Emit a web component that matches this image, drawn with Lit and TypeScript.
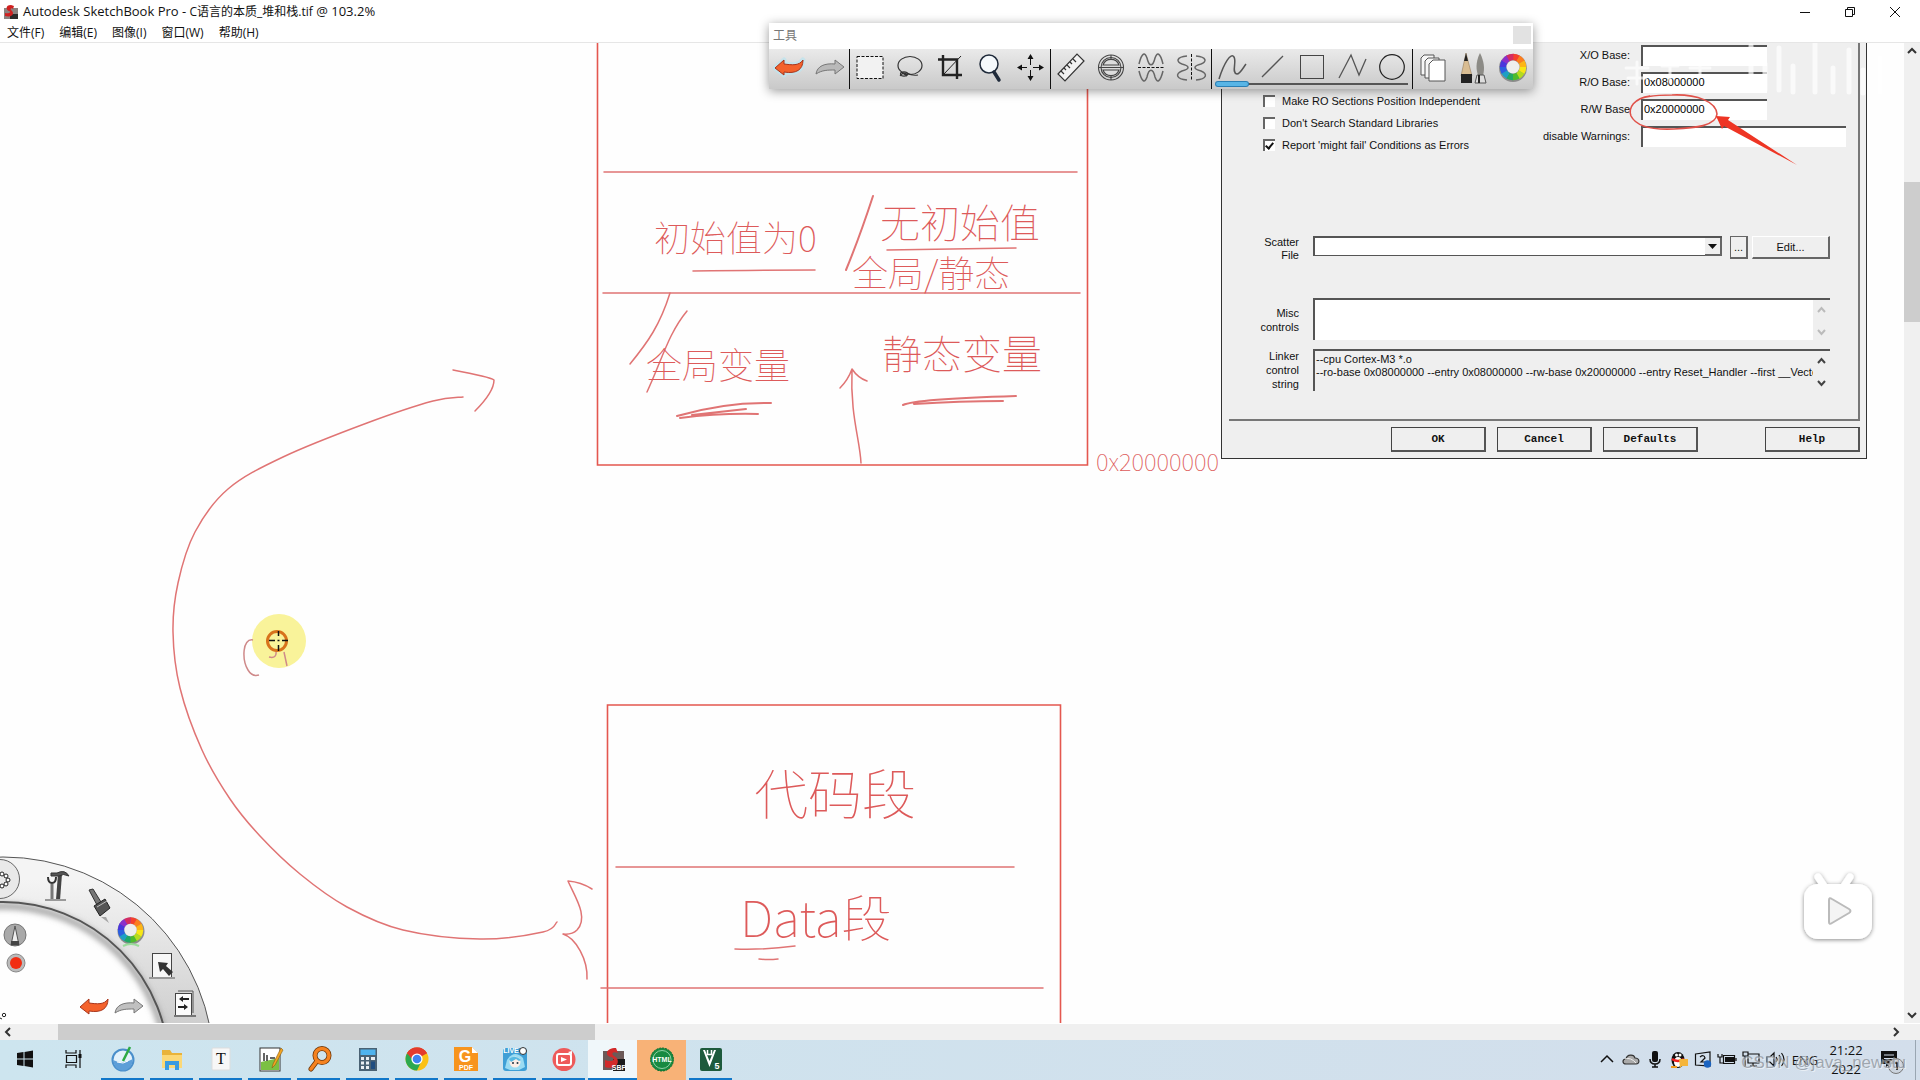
import { LitElement, html, svg, css, nothing } from "lit";
import { customElement, property } from "lit/decorators.js";

type Point = [number, number];

/** Joins points with a smooth line (Catmull-Rom turned into cubic segments). */
function smooth(points: Point[]): string {
  let d = `M${points[0][0]},${points[0][1]}`;
  for (let i = 0; i < points.length - 1; i++) {
    const a = points[Math.max(0, i - 1)];
    const b = points[i];
    const c = points[i + 1];
    const e = points[Math.min(points.length - 1, i + 2)];
    d += ` C${b[0] + (c[0] - a[0]) / 6},${b[1] + (c[1] - a[1]) / 6} ${c[0] - (e[0] - b[0]) / 6},${c[1] - (e[1] - b[1]) / 6} ${c[0]},${c[1]}`;
  }
  return d;
}

/** Hue ring made of short coloured arcs. */
function hueRing(cx: number, cy: number, r: number, w: number) {
  const hues = ["#f5402c", "#fb7d1e", "#fdb515", "#f7e615", "#b4dc1e", "#4dbb2c", "#21a866", "#1f9fc4", "#2c5fe0", "#4a36dc", "#8b2fc9", "#d52c62"];
  return hues.map((c, i) => {
    const a0 = ((i * 30 - 90) * Math.PI) / 180;
    const a1 = ((i * 30 - 58) * Math.PI) / 180;
    return svg`<path d="M${cx + r * Math.cos(a0)},${cy + r * Math.sin(a0)} A${r},${r} 0 0 1 ${cx + r * Math.cos(a1)},${cy + r * Math.sin(a1)}" fill="none" stroke=${c} stroke-width=${w}/>`;
  });
}

const undoShape = "M6 19 L15 11 L15 15 C23 16 30 17 34 11 C34 21 27 25 15 23 L15 26 Z";
const redoShape = "M35 18 L26 11 L26 15 C16 14 8 17 7 25 C13 21 19 21 26 21 L26 25 Z";

const toolIcons: Record<string, unknown> = {
  undo: svg`<path d=${undoShape} stroke="#bfe3ee" stroke-width="5" fill="none" stroke-linejoin="round" opacity=".8"/><path d=${undoShape} fill="#f4622c" stroke="#a8341a"/>`,
  redo: svg`<path d=${redoShape} fill="#b9b9b9" stroke="#777"/>`,
  select: svg`<rect x="7" y="7.500" width="26" height="22" fill="#f2f2f2" stroke="#111" stroke-width="1" stroke-dasharray="3 1.500"/>`,
  lasso: svg`<g fill="none" stroke="#333" stroke-width="1.200"><ellipse cx="20" cy="16.500" rx="12" ry="9"/><ellipse cx="14" cy="25" rx="3.500" ry="2.200"/><path d="M11 23 L17 27 M17 24 Q22 27 28 26 M10 27 Q14 22 17 26"/></g>`,
  crop: svg`<g fill="none" stroke="#222" stroke-width="2.400"><path d="M13 6 V26 H32"/><path d="M8 10.500 H27 V30"/><path d="M14 25 L31 7" stroke-width="1"/></g>`,
  zoom: svg`<circle cx="19" cy="15" r="9" fill="#f5f9fc" stroke="#1f2a3a" stroke-width="1.500"/><path d="M24 23 L29 31" stroke="#1f2a3a" stroke-width="3.500" stroke-linecap="round"/>`,
  move: svg`<g stroke="#111" fill="#111"><path d="M20.500 9 V16 M20.500 21 V28 M10 18.500 H17 M23 18.500 H30" stroke-width="1"/><path d="M20.500 5 L23.500 10 H17.500 Z M20.500 32 L23.500 27 H17.500 Z M7 18.500 L12 15.500 V21.500 Z M34 18.500 L29 15.500 V21.500 Z" stroke="none"/></g>`,
  ruler: svg`<g fill="#f2f2f2" stroke="#333" stroke-width="1.200"><path d="M7 25 L26 5 L33 12 L14 32 Z"/><path d="M10 22 l3 3 M13 19 l2 2 M16 16 l3 3 M19 13 l2 2 M22 10 l3 3" fill="none"/></g>`,
  ellipse: svg`<g fill="none" stroke="#444" stroke-width="1.100"><circle cx="20" cy="18.500" r="12.500"/><circle cx="20" cy="18.500" r="10"/><path d="M12 16 A8.500 8.500 0 0 1 28 16 Z M12 21 A8.500 8.500 0 0 0 28 21 Z" fill="#ddd"/><path d="M7 18.500 H33 M20 6 v4 M20 27 v4"/></g>`,
  symx: svg`<g fill="none" stroke="#666" stroke-width="1.500"><path d="M8 15 C11 3 14 3 16 9 C18 18 22 18 24 9 C26 3 29 3 32 15"/><path d="M8 22 C11 34 14 34 16 28 C18 19 22 19 24 28 C26 34 29 34 32 22"/><path d="M7 18.500 H34" stroke="#111" stroke-width="1" stroke-dasharray="3 1.500"/></g>`,
  symy: svg`<g fill="none" stroke="#666" stroke-width="1.500"><path d="M16 7 C5 8 5 13 11 15 C19 17 19 20 11 22 C4 25 5 30 16 31"/><path d="M25 7 C36 8 36 13 30 15 C22 17 22 20 30 22 C37 25 36 30 25 31"/><path d="M20.500 5 V32" stroke="#111" stroke-width="1" stroke-dasharray="3 1.500"/></g>`,
  curve: svg`<path d="M7 30 C12 14 19 3 22 8 C25 13 19 24 25 25 C28 25 31 19 34 15" fill="none" stroke="#555" stroke-width="1.500"/>`,
  line: svg`<path d="M10 28 L31 7" stroke="#555" stroke-width="1.300"/>`,
  square: svg`<rect x="8.500" y="6.500" width="23" height="23" fill="none" stroke="#444"/>`,
  poly: svg`<path d="M7 29 L19 6 L27 26 L34 10" fill="none" stroke="#555" stroke-width="1.300"/>`,
  circle: svg`<circle cx="20" cy="18" r="12.300" fill="none" stroke="#222" stroke-width="1.200"/>`,
  layers: svg`<g fill="#f6f6f6" stroke="#555"><path d="M8 9 l3 -3 h10 v20 h-13 Z"/><path d="M12 12 l3 -3 h11 v20 h-14 Z"/><path d="M16 15 l4 -4 h12 v21 h-16 Z" fill="#fff"/></g>`,
  pencils: svg`<path d="M8 27 L13 4 L19 27 Z" fill="#d9bd93" stroke="#8a6f4a" stroke-width=".500"/><path d="M11 12 L13 4 L15 12 Z" fill="#222"/><path d="M8 25 h11 v9 h-11 Z" fill="#222"/><path d="M27 4 C31 12 32 20 30 26 H25 C22 18 24 10 27 4 Z" fill="#8c8b86"/><path d="M24 26 h7 l2 8 h-11 Z" fill="#ddd" stroke="#555"/><path d="M26 26 v8" stroke="#222" stroke-width="2"/>`,
  wheel: svg`<circle cx="20" cy="19" r="14" fill="#222" opacity=".4"/>${hueRing(20, 18, 10, 6.5)}<circle cx="20" cy="18" r="6.500" fill="#eee"/>`,
};

const toolGroups = [
  [["undo", "撤消"], ["redo", "重做"]],
  [["select", "选择"], ["lasso", "套索"], ["crop", "裁剪"], ["zoom", "缩放"], ["move", "移动"]],
  [["ruler", "直尺"], ["ellipse", "椭圆"], ["symx", "水平对称"], ["symy", "垂直对称"]],
  [["curve", "曲线"], ["line", "直线"], ["square", "矩形"], ["poly", "折线"], ["circle", "圆"]],
  [["layers", "图层"], ["pencils", "画笔"], ["wheel", "颜色"]],
];

@customElement("tool-palette")
class ToolPalette extends LitElement {
  static styles = css`
    :host { display: block; background: #fff; box-shadow: 0 2px 10px rgba(0, 0, 0, .4); font: 12px/14px "Liberation Sans", "Noto Sans CJK SC", sans-serif; }
    .head { display: flex; justify-content: space-between; padding: 3px 2px 5px 4px; color: #777; }
    .name { padding-top: 3px; }
    .close { width: 18px; height: 18px; border: 0; padding: 0; background: #e2e2e2; }
    .tools { display: flex; background: linear-gradient(#eaeaea, #c9c9c9); height: 40px; }
    .group { display: flex; position: relative; }
    .group + .group { border-left: 1px solid #111; }
    .tool { width: 40px; height: 40px; border: 0; padding: 0; background: none; }
    .tool svg { display: block; }
    .track { position: absolute; left: 4px; right: 4px; bottom: 4px; height: 2px; background: #555; }
    .mark { position: absolute; left: 0; top: -1px; width: 32px; height: 4px; border-radius: 2px; background: #58b5e6; box-shadow: 0 0 0 1px #2a7fb4; }
  `;
  render() {
    return html`
      <div class="head"><span class="name">工具</span><button class="close" aria-label="关闭"></button></div>
      <div class="tools">
        ${toolGroups.map((g, i) => html`<div class="group">
          ${g.map(([id, name]) => html`<button class="tool" aria-label=${name}><svg width="40" height="40" viewBox="0 0 40 40">${toolIcons[id]}</svg></button>`)}
          ${i === 3 ? html`<div class="track"><div class="mark"></div></div>` : nothing}
        </div>`)}
      </div>`;
  }
}

@customElement("linker-dialog")
class LinkerDialog extends LitElement {
  static styles = css`
    :host { display: block; box-sizing: border-box; background: #efefef; border: solid #333; border-width: 0 1px 1px; padding: 0 6px 6px 7px; font: 11px/14px "Liberation Sans", sans-serif; color: #111; }
    .panel { border: solid #777; border-width: 0 2px 2px 0; padding: 2px 28px 28px 20px; }
    .top { display: flex; align-items: flex-start; }
    .checks { display: flex; flex-direction: column; gap: 8px; padding: 49px 0 0 14px; flex: 1; }
    .check { display: flex; align-items: center; gap: 7px; white-space: nowrap; }
    .check input { appearance: none; margin: 0; width: 12px; height: 12px; background: #fff; border: solid #666; border-width: 2px 0 0 2px; }
    .check input:checked { position: relative; }
    .check input:checked::after { content: ""; position: absolute; left: 2px; top: 0; width: 3px; height: 6px; border: solid #111; border-width: 0 2px 2px 0; transform: rotate(40deg); }
    .fields { display: grid; grid-template-columns: auto 205px; column-gap: 11px; row-gap: 6px; margin-right: -16px; }
    .fields label { text-align: right; line-height: 21px; }
    input.text { box-sizing: border-box; width: 126px; height: 21px; border: solid #555; border-width: 2px 0 0 2px; background: #fff; font: inherit; padding: 0 0 3px 1px; }
    input.wide { width: 100%; }
    .rows { display: grid; grid-template-columns: 50px 1fr; column-gap: 14px; padding-top: 84px; }
    .rows label { text-align: right; }
    .lab1 { line-height: 13px; }
    .combo { display: flex; gap: 4px; margin-bottom: 39px; align-items: flex-start; }
    .selectbox { flex: 1; position: relative; margin-right: 4px; }
    select { appearance: none; display: block; width: 100%; height: 20px; background: #fff; border: solid #555; border-width: 2px 1px 1px 2px; border-radius: 0; }
    .drop { position: absolute; right: 0; top: 2px; width: 17px; height: 18px; background: #efefef; border: solid #666; border-width: 0 2px 2px 0; box-sizing: border-box; pointer-events: none; }
    .drop svg { display: block; }
    button { font: inherit; color: inherit; box-sizing: border-box; background: #efefef; border: solid #666; border-width: 1px 2px 2px 1px; padding: 0; border-radius: 0; }
    .dots { width: 18px; height: 23px; }
    .edit { width: 78px; height: 23px; border-color: #fff #666 #666 #fff; }
    .area { display: flex; height: 42px; border: solid #555; border-width: 2px 0 0 2px; background: #fff; box-sizing: border-box; }
    .misc { margin-bottom: 9px; }
    .misc-label { padding-top: 8px; }
    .string { background: #efefef; }
    textarea { flex: 1; min-width: 0; border: 0; padding: 2px 0 0 1px; background: none; resize: none; overflow: hidden; white-space: pre; font: 11px/13px "Liberation Sans", sans-serif; color: #111; outline: 0; }
    .bar { width: 17px; background: #efefef; }
    .bar svg { display: block; }
    .actions { display: flex; gap: 11px; padding: 6px 0 0 162px; }
    .actions button { width: 95px; height: 25px; font: bold 11px/14px "Liberation Mono", monospace; border-color: #444 #555 #555 #444; }
    .actions .help { margin-left: auto; }
  `;
  private bar(color: string) {
    return html`<div class="bar"><svg width="17" height="40" viewBox="0 0 17 40" fill="none" stroke=${color} stroke-width="2"><path d="M5 12 L8.500 8 L12 12 M5 30 L8.500 34 L12 30"/></svg></div>`;
  }
  render() {
    return html`
      <div class="panel">
        <div class="top">
          <div class="checks">
            <label class="check"><input type="checkbox" />Make RO Sections Position Independent</label>
            <label class="check"><input type="checkbox" />Don't Search Standard Libraries</label>
            <label class="check"><input type="checkbox" checked />Report 'might fail' Conditions as Errors</label>
          </div>
          <div class="fields">
            <label for="xo">X/O Base:</label><input class="text" id="xo" />
            <label for="ro">R/O Base:</label><input class="text" id="ro" value="0x08000000" />
            <label for="rw">R/W Base</label><input class="text" id="rw" value="0x20000000" />
            <label for="dw">disable Warnings:</label><input class="text wide" id="dw" />
          </div>
        </div>
        <div class="rows">
          <label class="lab1" for="scatter">Scatter<br />File</label>
          <div class="combo">
            <div class="selectbox">
              <select id="scatter"><option></option></select>
              <span class="drop"><svg width="15" height="16" viewBox="0 0 15 16"><path d="M3 6 H12 L7.500 11 Z" fill="#111"/></svg></span>
            </div>
            <button class="dots">...</button>
            <button class="edit">Edit...</button>
          </div>
          <label class="misc-label" for="misc">Misc<br />controls</label>
          <div class="area misc"><textarea id="misc"></textarea>${this.bar("#bbb")}</div>
          <label for="string">Linker<br />control<br />string</label>
          <div class="area string"><textarea id="string" readonly wrap="off" .value=${"--cpu Cortex-M3 *.o\n--ro-base 0x08000000 --entry 0x08000000 --rw-base 0x20000000 --entry Reset_Handler --first __Vectors"}></textarea>${this.bar("#444")}</div>
        </div>
      </div>
      <div class="actions"><button>OK</button><button>Cancel</button><button>Defaults</button><button class="help">Help</button></div>`;
  }
}

/** Corner puck with quick tools, drawn in canvas coordinates shifted by its own origin. */
@customElement("corner-puck")
class CornerPuck extends LitElement {
  static styles = css`
    :host { display: block; }
    svg { display: block; }
  `;
  render() {
    return html`<svg width="222" height="172" viewBox="0 851 222 172" role="img" aria-label="工具盘">
      <defs>
        <linearGradient id="ring" x1="0" y1="0" x2="0" y2="1"><stop offset="0" stop-color="#f4f4f4"/><stop offset=".4" stop-color="#cdcdcd"/></linearGradient>
        <filter id="soft"><feGaussianBlur stdDeviation="3"/></filter>
      </defs>
      <circle cx="3" cy="1068" r="188.500" fill="none" stroke="url(#ring)" stroke-width="45"/>
      <circle cx="3" cy="1068" r="211" fill="none" stroke="#555"/>
      <circle cx="3" cy="1070" r="164" fill="none" stroke="#888" stroke-width="5" filter="url(#soft)"/>
      <circle cx="3" cy="1068" r="166" fill="none" stroke="#555" stroke-width="2"/>
      <circle cx="0" cy="879" r="19.500" fill="#e9e9e9" stroke="#666"/>
      <g fill="#fff" stroke="#222"><circle cx="2" cy="874" r="2"/><circle cx="6" cy="876" r="2"/><circle cx="8" cy="880" r="2"/><circle cx="6" cy="884" r="2"/><circle cx="2" cy="886" r="2"/></g>
      <g stroke="#333" fill="none">
        <path d="M60 874 L58 900" stroke-width="4" stroke="#444"/>
        <path d="M51 873 h6 q8 -4 12 3 q-6 -3 -10 0 h-8 Z" fill="#555"/>
        <path d="M52 884 V900" stroke-width="3" stroke="#777"/>
        <path d="M48 877 q0 6 4 6 q4 0 4 -6" stroke-width="2"/>
        <path d="M45 900 H66" stroke="#999" stroke-width="2"/>
      </g>
      <g><path d="M89 890 L93 889 L101 902 L97 905 Z" fill="#777" stroke="#333"/><path d="M94 906 L105 899 L110 908 L100 916 Z" fill="#555" stroke="#222"/><path d="M97 907 L107 901" stroke="#bbb"/><path d="M87 917 h14 l8 6 l-3 -6" fill="#888" opacity=".7"/></g>
      <circle cx="131" cy="931" r="13.500" fill="#222" opacity=".45"/>${hueRing(130.5, 930, 9.5, 6.5)}<circle cx="130.500" cy="930" r="6.200" fill="#eee"/>
      <path d="M123 946 q8 -4 16 0" fill="none" stroke="#9bdc9b" stroke-width="2"/>
      <rect x="152.500" y="953.500" width="19" height="24" fill="#f7f7f7" stroke="#444"/><path d="M158 962 L168 963 L166 966 L173 972 L169 976 L163 969 L160 972 Z" fill="#333"/><path d="M149 978 H175" stroke="#999" stroke-width="2"/>
      <path d="M178 991 h15 v22" fill="none" stroke="#555"/><rect x="175.500" y="993.500" width="16" height="22" fill="#fbfbfb" stroke="#444"/>
      <path d="M179 999 l4 -3 v2 h6 v2 h-6 v2 Z M188 1007 l-4 -3 v2 h-6 v2 h6 v2 Z" fill="#222"/><path d="M174 1016 H196" stroke="#777" stroke-width="2"/>
      <circle cx="15" cy="935" r="11" fill="#a9a9a9" stroke="#777"/><path d="M11 945 L15 926 L19 945 Z" fill="#eee" stroke="#555"/><path d="M11 941 h8 v4 h-8 Z" fill="#444"/>
      <circle cx="16" cy="963" r="9" fill="#bbb" stroke="#888"/><circle cx="16" cy="963" r="6" fill="#f12d12"/>
      <g transform="translate(74 988)"><path d=${undoShape} fill="#f4622c" stroke="#a8341a"/></g>
      <g transform="translate(108 988)"><path d=${redoShape} fill="#c0c0c0" stroke="#777"/></g>
      <circle cx="4" cy="1015" r="1.700" fill="#fff" stroke="#222"/><path d="M0 1018 l2 1" stroke="#222"/>
    </svg>`;
  }
}

const loop: Point[] = [[463, 397], [433, 401], [367, 423], [283, 457], [228, 489], [195, 532], [178, 583], [173, 632], [180, 688], [202, 750], [230, 799], [260, 836], [300, 874], [347, 907], [403, 930], [480, 939], [543, 932], [557, 922]];

/** Handwritten notes: [x, baseline, size class, text]. */
const notes: [number, number, string, string][] = [
  [654, 252, "m", "初始值为0"],
  [880, 238, "l", "无初始值"],
  [852, 287, "m", "全局/静态"],
  [646, 379, "m", "全局变量"],
  [882, 369, "l", "静态变量"],
  [754, 815, "xl", "代码段"],
  [740, 937, "l2", "Data段"],
  [1096, 471, "s", "0x20000000"],
];

@customElement("ink-layer")
class InkLayer extends LitElement {
  static styles = css`
    :host { display: block; pointer-events: none; }
    svg { display: block; }
    text { font-family: "Noto Sans CJK SC", sans-serif; font-weight: 100; fill: #dd5a5a; }
    .s { font-size: 24px; }
    .m { font-size: 36px; }
    .l { font-size: 40px; }
    .l2 { font-size: 50px; }
    .xl { font-size: 54px; }
  `;
  render() {
    return html`<svg width="1904" height="980" viewBox="0 43 1904 980">
      <g fill="none" stroke="#e4574f" stroke-width="1.600">
        <path d="M597.500 43 V465 H1087.500 V43"/>
        <path d="M607.500 1023 V705 H1060.500 V1023"/>
      </g>
      <g fill="none" stroke="#e07474" stroke-width="1.500" stroke-linecap="round" stroke-linejoin="round">
        <path d="M604 172 H1077 M603 293 H1080 M616 867 H1014 M601 988 H1043"/>
        <path d="M873 196 Q860 236 846 270" stroke-width="2"/>
        <path d="M693 271 Q760 270 815 270 M887 250 Q950 249 1016 248"/>
        <path d="M670 293 C660 325 648 342 630 364 M687 311 C668 334 662 360 647 392"/>
        <path d="M677 416 Q725 402 771 403 M680 418 Q720 413 758 414 M692 415 L746 409" stroke-width="2"/>
        <path d="M903 405 Q915 399 1016 396 M914 404 Q960 401 1003 401" stroke-width="2"/>
        <path d="M861 463 C860 440 850 415 852 369 M840 388 Q848 380 852 369 Q858 378 867 381"/>
        <path d="M735 949 Q765 950 795 946 M759 959 Q768 960 778 959"/>
        <path d=${smooth(loop)}/>
        <path d="M453 370 Q490 377 494 380 Q494 392 475 411"/>
        <path d="M592 889 Q581 882 568 881 C575 897 589 917 577 930 Q572 935 563 934 C576 938 588 960 587 979"/>
      </g>
      ${notes.map(([x, y, c, t]) => svg`<text x=${x} y=${y} class=${c}>${t}</text>`)}
      <circle cx="279" cy="641" r="27" fill="#f9f39a"/>
      <path d="M253 640 C242 638 242 660 248 670 Q252 677 259 675 M269 657 Q277 659 276 651 M284 652 L287 666" fill="none" stroke="#cf8a8a" stroke-width="1.500"/>
      <circle cx="277" cy="641" r="9.500" fill="none" stroke="#d8731c" stroke-width="3"/>
      <path d="M269 640.500 H275 M282 640.500 H288 M278.500 631 V636 M278.500 645 V651 M277.500 640.500 h2" stroke="#111" stroke-width="1.500"/>
      <g fill="none" stroke="#fff" stroke-width="5" stroke-linecap="round" opacity=".7">
        <path d="M1751 46 V90 M1765 64 V90 M1779 48 V90 M1793 66 V92 M1815 44 V92 M1833 68 V92 M1849 50 V92 M1863 70 V93 M1880 58 V92"/>
        <path d="M1626 68 h22 M1637 62 v22 M1628 78 h18 M1662 66 h16 M1670 66 v16 M1690 68 h20 M1700 64 v12" stroke-width="3"/>
      </g>
      <path d="M1650 96 C1634 98 1628 108 1631 116 C1636 126 1652 130 1674 129 C1695 128 1716 126 1717 114 C1716 102 1698 94 1672 95 C1655 95 1642 96 1637 101" fill="none" stroke="#e0524a" stroke-width="1.600"/>
      <path d="M1716 116 L1730 117 L1728 120 L1797 165 L1724 126 L1722 129 Z" fill="#ee3524"/>
    </svg>`;
  }
}

const play = svg`<g fill="#fff" filter="url(#glow)"><path d="M19 13 L25 22 M51 13 L45 22" stroke="#fff" stroke-width="7" stroke-linecap="round"/><rect x="5" y="20" width="68" height="55" rx="14"/></g><path d="M30 36 Q30 33 33 35 L50 45 Q53 47 50 49 L33 59 Q30 61 30 58 Z" fill="#f4f4f4" stroke="#bbb" stroke-width="2"/>`;

const taskIcons: [string, string, unknown][] = [
  ["开始", "", svg`<path d="M6 8 L12.500 7 V13.500 H6 Z M13.500 7 L22 5.500 V13.500 H13.500 Z M6 14.500 H12.500 V21 L6 20 Z M13.500 14.500 H22 V22.500 L13.500 21 Z" fill="#111"/>`],
  ["任务视图", "", svg`<path d="M6 5 v3 h10 v-3 M6 23 v-3 h10 v3 M6.500 10.500 h10 v7 h-10 Z M20 5 v18" fill="none" stroke="#111" stroke-width="1.200"/><path d="M18.500 9 h3 v4 h-3 Z" fill="#111"/>`],
  ["浏览器", "on", svg`<circle cx="14" cy="15" r="10.500" fill="#e3f2fb" stroke="#4a8fcb" stroke-width="2"/><path d="M4 15 Q14 20 24 14 Q23 25 14 25.500 Q5 25 4 15 Z" fill="#5d9ed8"/><path d="M14 16 L21 2" stroke="#2eab45" stroke-width="2.500"/><path d="M8 17 l6 1 l5 -2" stroke="#fff" fill="none"/>`],
  ["文件资源管理器", "on", svg`<path d="M4 5 h8 l2 3 h10 v14 h-20 Z" fill="#e9b33a"/><path d="M4 10 h20 v13 h-20 Z" fill="#fcd876"/><path d="M7 25 v-9 h14 v9 h-4 v-5 h-6 v5 Z" fill="#3a9be0"/>`],
  ["Typora", "on", svg`<rect x="5" y="3" width="18" height="22" rx="1" fill="#f7f7f7" stroke="#ddd"/><text x="14" y="19" text-anchor="middle" class="serif">T</text>`],
  ["记事本", "on", svg`<rect x="4" y="3" width="20" height="23" fill="#fff" stroke="#333"/><path d="M5 17 L23 13 V25 H5 Z" fill="#7bc043"/><path d="M8 8 v8 M11 10 v6 M14 13 h5" stroke="#333" stroke-width="1.500"/><path d="M25 3 L17 19 l-1 4 l3 -3 L27 5 Z" fill="#f5a623" stroke="#8a5a10" stroke-width=".600"/>`],
  ["搜索", "on", svg`<circle cx="17" cy="10.500" r="7" fill="none" stroke="#6b3508" stroke-width="5"/><path d="M12 16 L6 24" stroke="#6b3508" stroke-width="5" stroke-linecap="round"/><circle cx="17" cy="10.500" r="7" fill="none" stroke="#f58220" stroke-width="3.500"/><path d="M12 16 L6 24" stroke="#f58220" stroke-width="3.500" stroke-linecap="round"/>`],
  ["计算器", "on", svg`<rect x="5" y="3" width="18" height="23" fill="#4a6274"/><rect x="6.500" y="4.500" width="15" height="5.500" fill="#4fb3ee"/><g fill="#e9eef2"><path d="M7 12h3v3h-3zM12 12h3v3h-3zM7 16.500h3v3h-3zM12 16.500h3v3h-3zM7 21h3v3h-3zM12 21h3v3h-3zM17 12h4v3h-4z"/></g><rect x="17" y="16.500" width="4" height="7.500" fill="#1f4d80"/>`],
  ["Chrome", "on", svg`<circle cx="14" cy="14" r="11.500" fill="#fbc116"/><path d="M14 14 L4 8.300 A11.500 11.500 0 0 1 24 8.300 Z" fill="#e33b2e"/><path d="M4 8.300 A11.500 11.500 0 0 0 14 25.500 L18.500 16 Z" fill="#2da94f"/><path d="M4 8.300 A11.500 11.500 0 0 1 24 8.300 L14 9 L9 14 Z" fill="#e33b2e"/><circle cx="14" cy="14" r="5.600" fill="#fff"/><circle cx="14" cy="14" r="4.300" fill="#3f82f1"/>`],
  ["PDF", "on", svg`<path d="M2 2 H20 L26 8 V26 H2 Z" fill="#f7941d"/><path d="M20 2 V8 H26 Z" fill="#fff"/><text x="13" y="17" text-anchor="middle" class="big">G</text><text x="14" y="25" text-anchor="middle" class="tiny">PDF</text>`],
  ["LIVE", "on", svg`<rect x="2" y="3" width="24" height="23" rx="3" fill="#3f9fd6"/><path d="M6 15 Q13 4 22 13 L24 22 L18 25 H9 L4 23 Z" fill="#9bdcf3"/><circle cx="14" cy="17" r="5.500" fill="#fdeee6"/><path d="M8 14 Q14 9 20 15 L18 16 L15 14 L10 17 Z" fill="#57b9e2"/><circle cx="12" cy="18" r="1" fill="#234"/><circle cx="16.500" cy="18" r="1" fill="#234"/><circle cx="22" cy="6" r="3.500" fill="#fff" stroke="#333"/><text x="10" y="8" text-anchor="middle" class="tiny">LIVE</text>`],
  ["录屏", "on", svg`<circle cx="14" cy="14.500" r="11.500" fill="#ee5a5a"/><rect x="7" y="9" width="14" height="11" rx="2" fill="none" stroke="#fff" stroke-width="2"/><path d="M11 12 l6 2.500 l-6 2.500 Z M18 7 l4 -1 v4 Z" fill="#fff"/>`],
  ["SketchBook", "on active", svg`<rect x="4" y="6" width="21" height="19" fill="#6c5a58"/><path d="M14 14 H26 V26 H14 Z" fill="#1b1b1b"/><path d="M17 3 C6 3 6 11 12 12 C18 14 13 18 6 15 V22 C18 26 23 15 15 11 C11 8 15 6 19 8 Z" fill="#d22a2a"/><text x="20" y="25" text-anchor="middle" class="tiny">SBP</text>`],
  ["编辑器", "alert", svg`<circle cx="14" cy="14.500" r="11.500" fill="#178a41" stroke="#0c6b2f" stroke-width="1" stroke-dasharray="2 1"/><circle cx="14" cy="14.500" r="9" fill="none" stroke="#8fd0a5"/><text x="14" y="17" text-anchor="middle" class="tiny">HTML</text>`],
  ["uVision5", "on", svg`<rect x="3" y="3" width="22" height="23" rx="2" fill="#1d5a3c"/><path d="M6 5 L12.500 22 L19 5 H17 L12.500 16 L8 5 Z" fill="#fff"/><path d="M10.500 5 V9.500 H14.500 V5" fill="none" stroke="#fff" stroke-width="1.500"/><text x="20" y="24" text-anchor="middle" class="mid">5</text>`],
];

const trayIcons: [string, unknown][] = [
  ["显示隐藏的图标", svg`<path d="M6 14 L12 8 L18 14" fill="none" stroke="#111" stroke-width="1.500"/>`],
  ["云", svg`<path d="M7 16 C3 16 3 11 7 11 C8 6 15 6 16 10 C21 10 21 16 17 16 Z" fill="#aaa" stroke="#333" stroke-width="1.200"/><path d="M6 11 Q12 9 17 15" stroke="#eee" fill="none"/>`],
  ["麦克风", svg`<rect x="9" y="3" width="6" height="11" rx="2" fill="#111"/><path d="M7 11 Q7 16 12 16 Q17 16 17 11 M12 16 V19 M9 19 h6" fill="none" stroke="#111" stroke-width="1.500"/>`],
  ["QQ", svg`<ellipse cx="11" cy="12" rx="6.500" ry="8" fill="#111"/><ellipse cx="11" cy="14" rx="4" ry="5" fill="#fff"/><path d="M5 11 Q11 15 17 11" stroke="#e22" stroke-width="2.500" fill="none"/><circle cx="9.500" cy="7" r="1.500" fill="#fff"/><circle cx="13" cy="7" r="1.500" fill="#fff"/><path d="M12 11 h9 v7 h-6 l-2 2 Z" fill="#f5b53a"/><path d="M4 19 h6" stroke="#f29b1d" stroke-width="2"/>`],
  ["更新", svg`<path d="M4.500 6 L19 4 V18 L4.500 17 Z M9 9 q4 -3 5 1 l-4 4 h5" fill="none" stroke="#111" stroke-width="1.200"/><circle cx="16.500" cy="16" r="3.700" fill="#1a63c0"/>`],
  ["电池", svg`<rect x="10" y="9" width="9" height="5" fill="#111"/><path d="M8.500 7.500 h11 v8 h-11 Z M21 10 v3 M3 6 v3 h4 v-3 M5 9 v6 h3" fill="none" stroke="#111" stroke-width="1.200"/>`],
  ["网络", svg`<path d="M9 6 h11 v9 h-11 Z M14 15 v3 M11 18 h7 M4 4 h5 v4 h-5 Z M6 8 v11" fill="none" stroke="#111" stroke-width="1.200"/>`],
  ["音量", svg`<path d="M4 9 h3 l4 -4 v13 l-4 -4 h-3 Z M13 9 q2 2.500 0 5 M16 7 q3 4 0 9 M18.500 5 q5 6.500 0 13" fill="none" stroke="#111" stroke-width="1.200"/>`],
];

@customElement("task-bar")
class TaskBar extends LitElement {
  static styles = css`
    :host { display: flex; justify-content: space-between; height: 40px; background: linear-gradient(90deg, #cde5ef, #d3deeb); font: 13px/19px "Open Sans", "Noto Sans", sans-serif; color: #111; position: relative; }
    button { border: 0; padding: 0; background: none; color: inherit; font: inherit; }
    .apps, .tray { display: flex; }
    .app { width: 49px; height: 40px; display: flex; justify-content: center; align-items: center; border-bottom: 2px solid transparent; box-sizing: border-box; }
    .on { border-image: linear-gradient(90deg, transparent 10%, #1177c9 10%, #1177c9 91%, transparent 91%) 2; border-bottom: 2px solid; }
    .active { background: #f0f7fa; border-image: none; border-color: #1177c9; }
    .alert { background: #f8b277; }
    svg { display: block; }
    .serif { font: 16px "Liberation Serif", serif; fill: #111; }
    .big { font: bold 16px "Liberation Sans", sans-serif; fill: #fff; }
    .mid { font: bold 9px "Liberation Sans", sans-serif; fill: #fff; }
    .tiny { font: bold 7px "Liberation Sans", sans-serif; fill: #fff; }
    .icon { width: 24px; display: flex; align-items: center; }
    .lang { width: 36px; }
    .clock { width: 46px; text-align: center; padding-top: 1px; }
    .note { width: 46px; display: flex; align-items: center; justify-content: center; }
    .peek { width: 4px; border-left: 1px solid #9aa6b2; }
    .mark { position: absolute; right: 14px; bottom: 7px; font: 17px/20px "Liberation Sans", sans-serif; color: rgba(140, 146, 154, .75); text-shadow: 1px 1px 0 rgba(255, 255, 255, .5); white-space: nowrap; pointer-events: none; }
  `;
  render() {
    return html`
      <div class="apps">
        ${taskIcons.map(([name, cls, icon]) => html`<button class="app ${cls}" aria-label=${name}><svg width="28" height="28" viewBox="0 0 28 28">${icon}</svg></button>`)}
      </div>
      <div class="tray">
        ${trayIcons.map(([name, icon]) => html`<button class="icon" aria-label=${name}><svg width="24" height="24" viewBox="0 0 24 24">${icon}</svg></button>`)}
        <button class="lang">ENG</button>
        <div class="clock">21:22<br />2022</div>
        <button class="note" aria-label="通知"><svg width="30" height="30" viewBox="0 0 30 30"><path d="M4 6 H20 V19 H13 L9 22 V19 H4 Z" fill="#111"/><path d="M7 10 h10 M7 13.500 h10" stroke="#d3deeb"/><circle cx="19" cy="21" r="7.500" fill="#c9d1da" fill-opacity=".85" stroke="#777"/><path d="M18 18 h2 v7" fill="none" stroke="#111" stroke-width="1.500"/></svg></button>
        <div class="peek"></div>
      </div>
      <div class="mark">CSDN @java_newstu</div>`;
  }
}

@customElement("app-root")
class AppRoot extends LitElement {
  @property() file = "C语言的本质_堆和栈.tif";
  static styles = css`
    :host { display: grid; grid-template-rows: auto auto 1fr auto auto; min-height: 100vh; background: #fff; font: 12px/20px "Open Sans", "Noto Sans CJK SC", sans-serif; color: #111; position: relative; overflow: hidden; }
    button { border: 0; padding: 0; background: none; font: inherit; color: inherit; }
    svg { display: block; }
    .title { display: flex; align-items: center; height: 23px; padding: 0 3px; font-size: 13px; }
    .name { flex: 1; padding-left: 4px; }
    .file { font-size: 12px; }
    .win { width: 45px; display: flex; justify-content: center; }
    .menu { display: flex; gap: 15px; padding: 0 7px; height: 19px; line-height: 18px; border-bottom: 1px solid #e6e6e6; }
    .work { display: grid; grid-template-columns: 1fr 16px; min-height: 0; }
    .canvas { position: relative; overflow: hidden; background: #fefefe; }
    .dialog { position: absolute; left: 1221px; top: 0; width: 646px; }
    .ink { position: absolute; left: 0; top: 0; }
    .puck { position: absolute; left: 0; bottom: 0; }
    .tv { position: absolute; right: 27px; bottom: 69px; }
    .palette { position: absolute; left: 769px; top: 23px; }
    .vbar { display: flex; flex-direction: column; justify-content: space-between; background: #f0f0f0; position: relative; }
    .vthumb { position: absolute; left: 0; right: 0; top: 14.2%; height: 14.3%; background: #cdcdcd; }
    .hbar { display: flex; justify-content: space-between; height: 16px; margin-top: 1px; background: #f0f0f0; padding-right: 16px; position: relative; }
    .hthumb { position: absolute; left: 3%; width: 28%; top: 0; bottom: 0; background: #cdcdcd; }
  `;
  private arrow(d: string, name: string) {
    return html`<button aria-label=${name}><svg width="16" height="16" viewBox="0 0 16 16"><path d=${d} fill="none" stroke="#333" stroke-width="2"/></svg></button>`;
  }
  render() {
    return html`
      <header class="title">
        <svg width="16" height="16" viewBox="0 0 16 16"><path d="M1 4 H15 V15 H1 Z" fill="#8b8380"/><path d="M7 10 h8 v5 h-8 Z" fill="#2b2b2b"/><path d="M8 1 C2 1 3 6 6 7 C9 8 6 10 2 9 V12 C10 14 12 9 8 6 C7 4 9 4 10 5 L11 2 Z" fill="#d01f1f"/></svg>
        <span class="name">Autodesk SketchBook Pro - <span class="file">${this.file}</span> @ 103.2%</span>
        <button class="win" aria-label="最小化"><svg width="12" height="12" viewBox="0 0 12 12"><path d="M1 6.500 H11" stroke="#111"/></svg></button>
        <button class="win" aria-label="还原"><svg width="12" height="12" viewBox="0 0 12 12"><path d="M1.500 3.500 h7 v7 h-7 Z M3.500 3 V1.500 h7 v7 H9" fill="none" stroke="#111"/></svg></button>
        <button class="win" aria-label="关闭"><svg width="12" height="12" viewBox="0 0 12 12"><path d="M1 1 L11 11 M11 1 L1 11" stroke="#111"/></svg></button>
      </header>
      <nav class="menu">${["文件(F)", "编辑(E)", "图像(I)", "窗口(W)", "帮助(H)"].map((m) => html`<button>${m}</button>`)}</nav>
      <main class="work">
        <div class="canvas">
          <linker-dialog class="dialog"></linker-dialog>
          <ink-layer class="ink"></ink-layer>
          <corner-puck class="puck"></corner-puck>
          <svg class="tv" width="78" height="90" viewBox="0 0 78 90"><defs><filter id="glow" x="-20%" y="-20%" width="140%" height="140%"><feDropShadow dx="0" dy="1" stdDeviation="2" flood-color="#000" flood-opacity=".45"/></filter></defs>${play}</svg>
        </div>
        <div class="vbar">
          ${this.arrow("M4 10 L8 6 L12 10", "向上滚动")}
          <div class="vthumb"></div>
          ${this.arrow("M4 6 L8 10 L12 6", "向下滚动")}
        </div>
      </main>
      <div class="hbar">
        ${this.arrow("M10 4 L6 8 L10 12", "向左滚动")}
        <div class="hthumb"></div>
        ${this.arrow("M6 4 L10 8 L6 12", "向右滚动")}
      </div>
      <task-bar></task-bar>
      <tool-palette class="palette"></tool-palette>`;
  }
}
